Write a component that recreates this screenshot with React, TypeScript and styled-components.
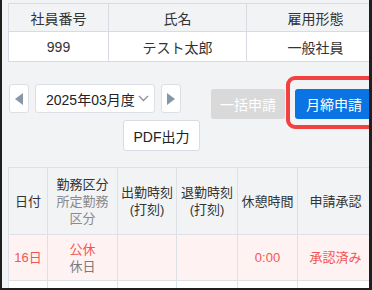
import React from "react";
import styled, { createGlobalStyle } from "styled-components";

const Global = createGlobalStyle`
  html, body {
    margin: 0;
    padding: 0;
    background: #1f1f1f;
  }
  * {
    box-sizing: border-box;
  }
`;

const Frame = styled.div`
  width: 372px;
  height: 290px;
  background: #1f1f1f;
  padding: 0 3px 2px 2px;
`;

const Page = styled.div`
  position: relative;
  width: 100%;
  height: 100%;
  background: #f2f3f5;
  overflow: hidden;
  padding: 3px 0 0 6px;
  font-family: "Liberation Sans", "Noto Sans CJK JP", sans-serif;
  color: #333;
`;

const InfoTable = styled.table`
  border-collapse: collapse;
  table-layout: fixed;
  width: 376px;
  font-size: 14px;
  th,
  td {
    border: 1px solid #d8dce2;
    text-align: center;
    font-weight: 400;
    padding: 0;
  }
  th {
    height: 28px;
    background: #f2f3f5;
  }
  td {
    height: 30px;
    background: #fff;
  }
`;

const Toolbar = styled.div`
  display: flex;
  flex-direction: column;
  margin-top: 22px;
`;

const ToolRow = styled.div`
  display: flex;
  align-items: flex-start;
`;

const MonthGroup = styled.div`
  display: flex;
  gap: 6px;
  margin-left: 1px;
`;

const ArrowBtn = styled.div`
  width: 20px;
  height: 29px;
  background: #fff;
  border: 1px solid #dcdfe6;
  border-radius: 3px;
  display: flex;
  align-items: center;
  justify-content: center;
`;

const Select = styled.div`
  width: 120px;
  height: 29px;
  background: #fff;
  border: 1px solid #dcdfe6;
  border-radius: 3px;
  display: flex;
  align-items: center;
  padding: 0 5px 0 10px;
  font-size: 14px;
  color: #222;
  justify-content: space-between;
`;

const ApplyGroup = styled.div`
  display: flex;
  gap: 10px;
  margin-left: 30px;
  margin-top: 5px;
`;

const Btn = styled.div<{ $variant: "disabled" | "primary" | "plain" }>`
  height: 30px;
  padding: 0 8px;
  display: flex;
  align-items: center;
  font-size: 14px;
  white-space: nowrap;
  border-radius: 3px;
  background: ${(p) =>
    p.$variant === "primary" ? "#0a74e4" : p.$variant === "disabled" ? "#d9d9d9" : "#fff"};
  color: ${(p) => (p.$variant === "plain" ? "#222" : "#fff")};
  border: 1px solid
    ${(p) => (p.$variant === "plain" ? "#d9dce2" : "transparent")};
`;

const PrimaryBtn = styled(Btn)`
  padding: 0 10px;
`;

const PdfRow = styled.div`
  display: flex;
  margin-top: 1px;
  padding-left: 115px;
`;

const PdfBtn = styled(Btn)`
  height: 31px;
  width: 77px;
  justify-content: center;
`;

const Highlight = styled.div`
  position: absolute;
  left: 284px;
  top: 76px;
  width: 96px;
  height: 53px;
  border: 4px solid #f24141;
  border-radius: 9px;
  pointer-events: none;
`;

const DayTable = styled.table`
  margin-top: 16px;
  border-collapse: collapse;
  table-layout: fixed;
  width: 365px;
  font-size: 13px;
  line-height: 17px;
  th,
  td {
    border: 1px solid #dde1e6;
    text-align: center;
    font-weight: 400;
    padding: 0;
  }
  th {
    height: 67px;
    background: #f2f3f5;
  }
`;

const Sub = styled.div`
  color: #8a8a8a;
`;

const DayRow = styled.tr<{ $holiday?: boolean }>`
  td {
    height: 46px;
    background: ${(p) => (p.$holiday ? "#fff2f2" : "#fff")};
    color: ${(p) => (p.$holiday ? "#f25555" : "#333")};
  }
`;

const Gray = styled.div`
  color: #7a7a7a;
`;

const Triangle = ({ dir }: { dir: "left" | "right" }) => (
  <svg width="8" height="12" viewBox="0 0 8 12">
    {dir === "left" ? (
      <polygon points="8,0 8,12 0,6" fill="#8797a8" />
    ) : (
      <polygon points="0,0 0,12 8,6" fill="#8797a8" />
    )}
  </svg>
);

const Chevron = () => (
  <svg width="11" height="7" viewBox="0 0 11 7">
    <polyline points="1,1 5.5,5.5 10,1" fill="none" stroke="#8a94a3" strokeWidth="1.4" />
  </svg>
);

export default function App() {
  return (
    <>
      <Global />
      <Frame>
        <Page>
          <InfoTable>
            <colgroup>
              <col style={{ width: 100 }} />
              <col style={{ width: 138 }} />
              <col style={{ width: 138 }} />
            </colgroup>
            <thead>
              <tr>
                <th>社員番号</th>
                <th>氏名</th>
                <th>雇用形態</th>
              </tr>
            </thead>
            <tbody>
              <tr>
                <td>999</td>
                <td>テスト太郎</td>
                <td>一般社員</td>
              </tr>
            </tbody>
          </InfoTable>

          <Toolbar>
            <ToolRow>
              <MonthGroup>
                <ArrowBtn>
                  <Triangle dir="left" />
                </ArrowBtn>
                <Select>
                  <span>2025年03月度</span>
                  <Chevron />
                </Select>
                <ArrowBtn>
                  <Triangle dir="right" />
                </ArrowBtn>
              </MonthGroup>
              <ApplyGroup>
                <Btn $variant="disabled">一括申請</Btn>
                <PrimaryBtn $variant="primary">月締申請</PrimaryBtn>
              </ApplyGroup>
            </ToolRow>
            <PdfRow>
              <PdfBtn $variant="plain">PDF出力</PdfBtn>
            </PdfRow>
          </Toolbar>
          <Highlight />

          <DayTable>
            <colgroup>
              <col style={{ width: 39 }} />
              <col style={{ width: 70 }} />
              <col style={{ width: 59 }} />
              <col style={{ width: 61 }} />
              <col style={{ width: 60 }} />
              <col style={{ width: 76 }} />
            </colgroup>
            <thead>
              <tr>
                <th>日付</th>
                <th>
                  勤務区分
                  <Sub>所定勤務</Sub>
                  <Sub>区分</Sub>
                </th>
                <th>
                  出勤時刻
                  <br />
                  (打刻)
                </th>
                <th>
                  退勤時刻
                  <br />
                  (打刻)
                </th>
                <th>休憩時間</th>
                <th>申請承認</th>
              </tr>
            </thead>
            <tbody>
              <DayRow $holiday>
                <td>16日</td>
                <td>
                  公休
                  <Gray>休日</Gray>
                </td>
                <td></td>
                <td></td>
                <td>0:00</td>
                <td>承認済み</td>
              </DayRow>
              <DayRow>
                <td>17日</td>
                <td>
                  出勤
                  <Gray>出勤</Gray>
                </td>
                <td>08:57</td>
                <td>18:00</td>
                <td>1:00</td>
                <td>承認済み</td>
              </DayRow>
            </tbody>
          </DayTable>
        </Page>
      </Frame>
    </>
  );
}
